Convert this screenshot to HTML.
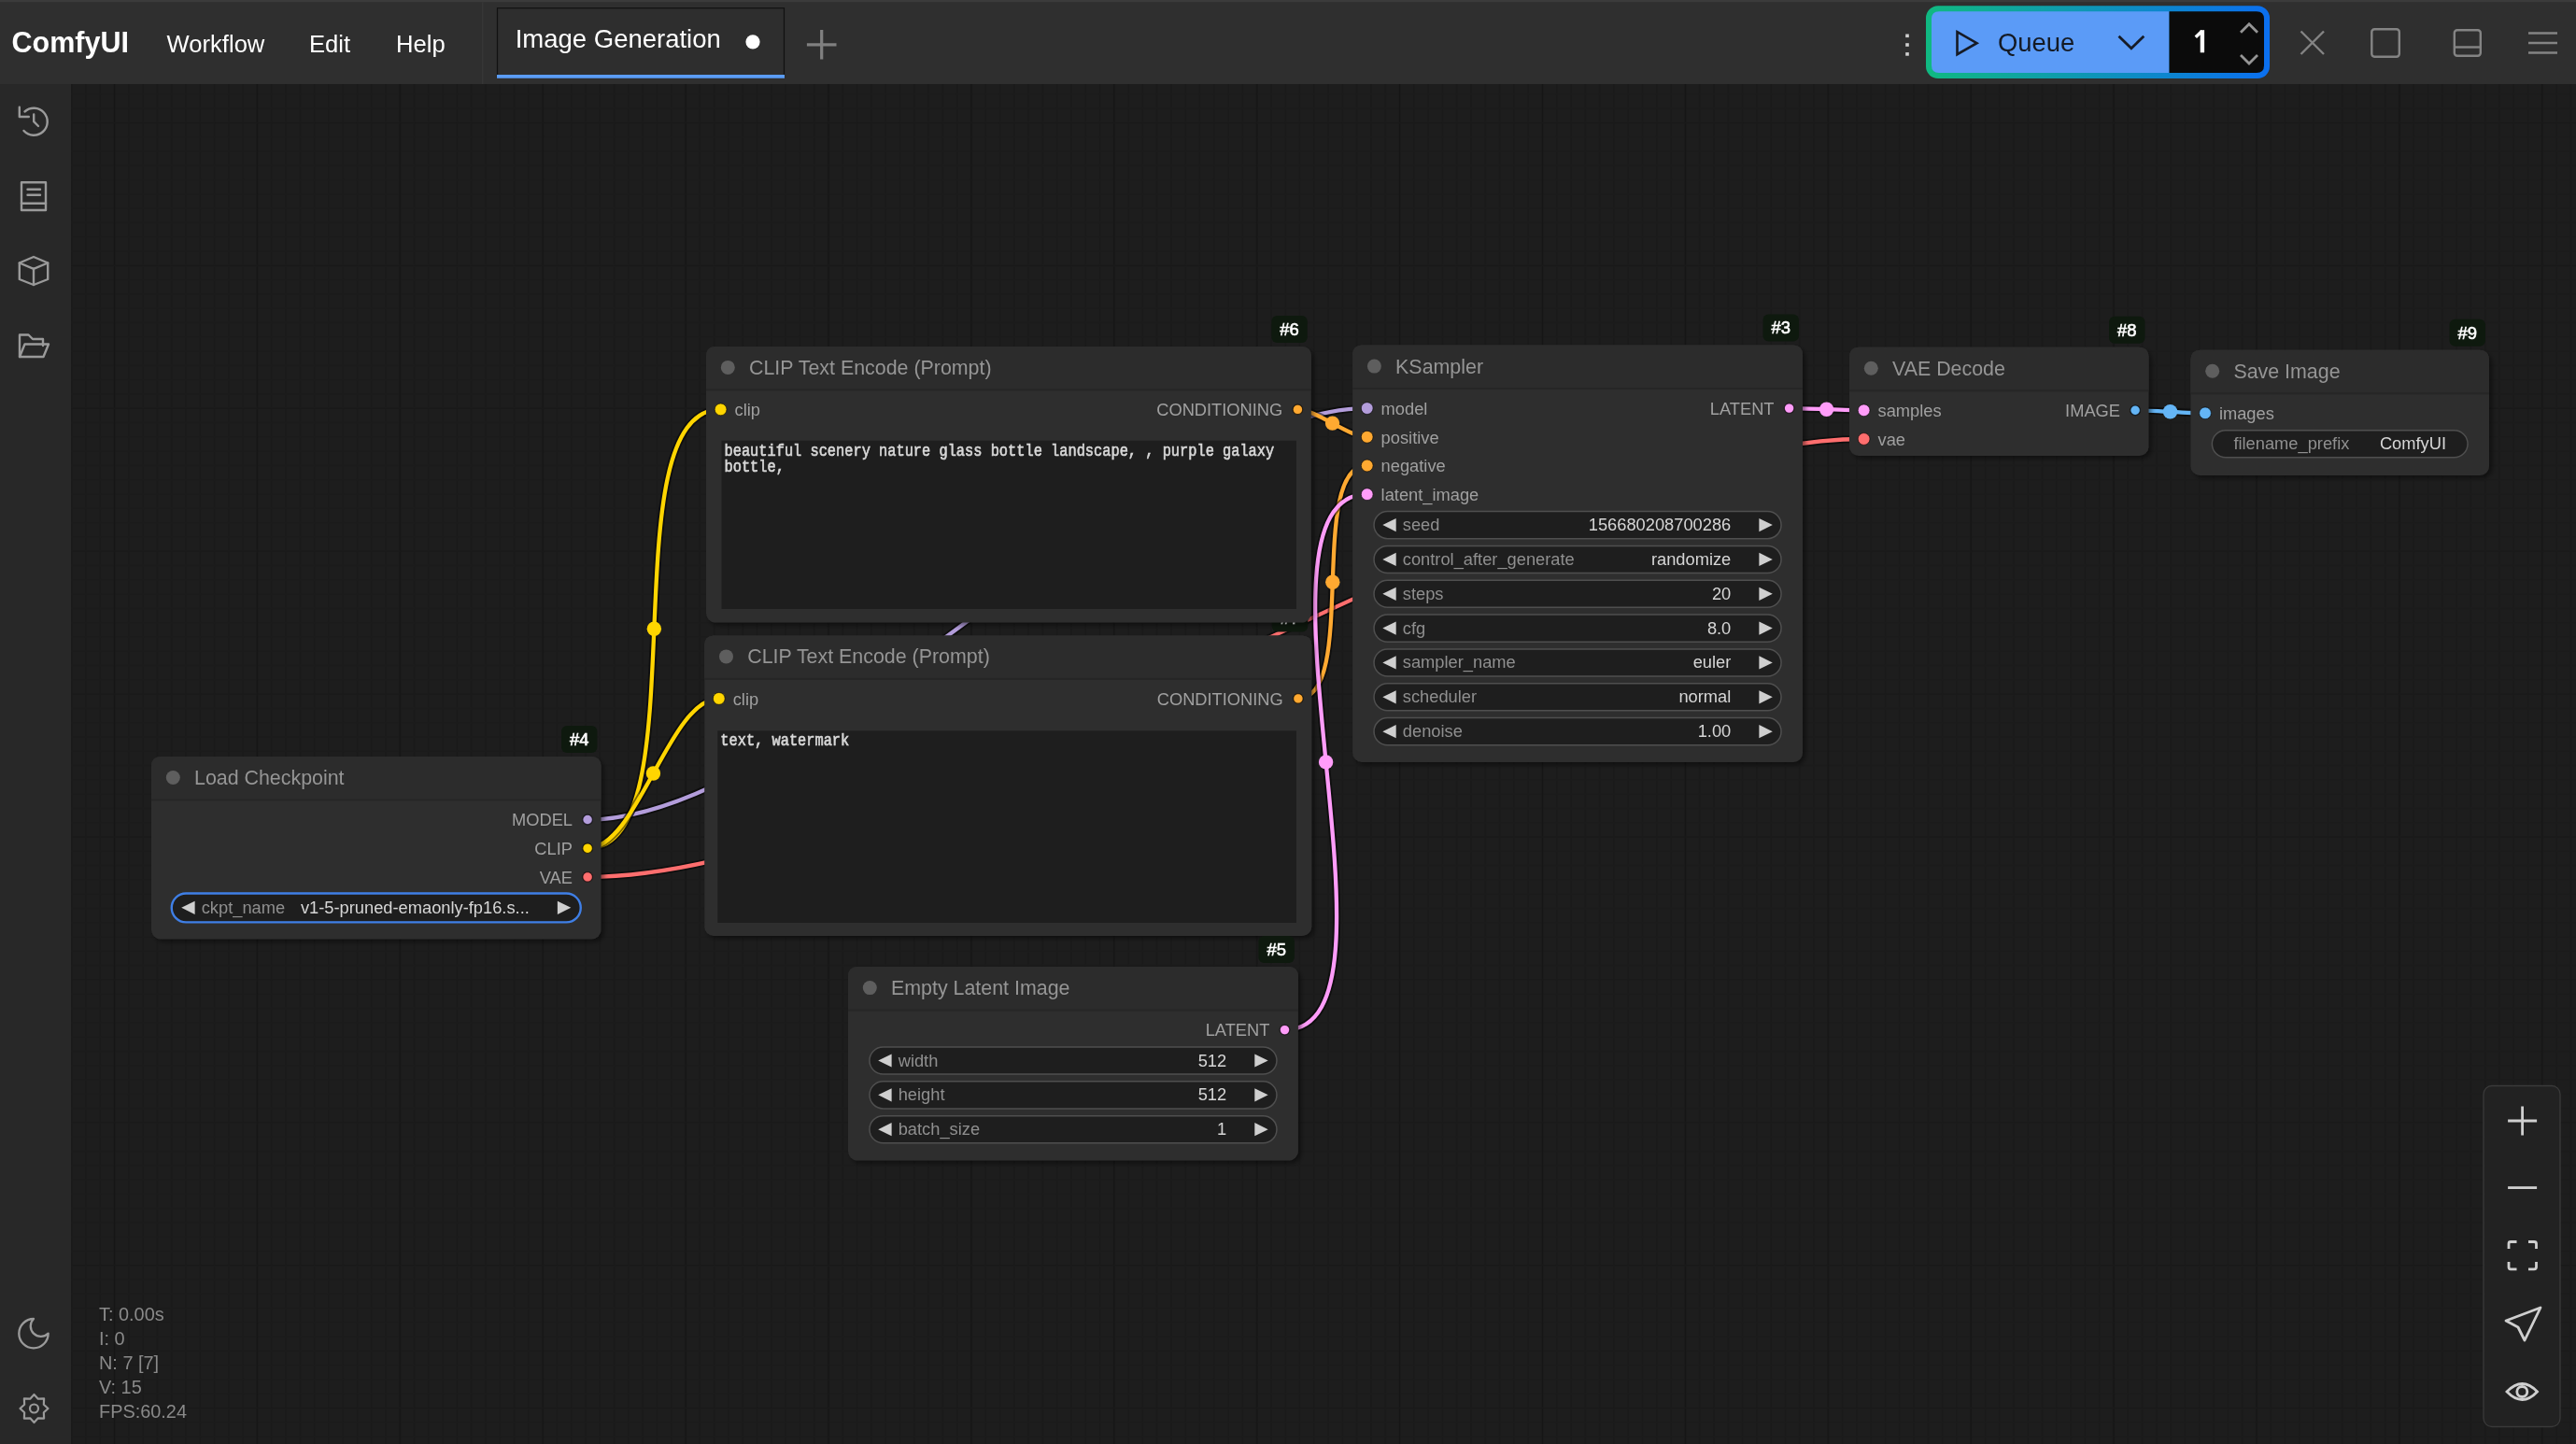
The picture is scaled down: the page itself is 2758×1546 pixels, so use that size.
<!DOCTYPE html>
<html><head><meta charset="utf-8"><title>ComfyUI</title>
<style>html,body{margin:0;padding:0;width:2758px;height:1546px;overflow:hidden;background:#1d1d1d;}
svg text{white-space:pre;}</style></head>
<body><div style="position:relative;width:2758px;height:1546px">
<svg width="2758" height="1546" viewBox="0 0 2758 1546" style="position:absolute;left:0;top:0;will-change:transform">
<defs>
<pattern id="gmin" x="-7.465" y="1.5549999999999997" width="15.29" height="15.29" patternUnits="userSpaceOnUse"><path d="M7.645 0V15.29" stroke="#191919" stroke-width="1.3" fill="none"/><path d="M0 7.645H15.29" stroke="#1a1a1a" stroke-width="1.1" fill="none"/></pattern>
<pattern id="gmaj" x="46.05" y="55.05" width="152.9" height="152.9" patternUnits="userSpaceOnUse"><path d="M76.45 0V152.9" stroke="#161616" stroke-width="1.6" fill="none"/><path d="M0 76.45H152.9" stroke="#191919" stroke-width="1.3" fill="none"/></pattern>
<filter id="sh" x="-5%" y="-5%" width="110%" height="110%"><feDropShadow dx="3" dy="3" stdDeviation="2.4" flood-color="#000" flood-opacity="0.45"/></filter>
</defs>
<rect x="0" y="0" width="2758" height="1546" fill="#1d1d1d"/>
<rect x="76" y="90" width="2682" height="1456" fill="url(#gmin)"/>
<rect x="76" y="90" width="2682" height="1456" fill="url(#gmaj)"/>
<g fill="none" stroke-linecap="round">
<path d="M629.10 877.49C865.02 877.49 1227.78 437.09 1463.70 437.09" stroke="rgba(0,0,0,0.5)" stroke-width="8"/>
<path d="M629.10 877.49C865.02 877.49 1227.78 437.09 1463.70 437.09" stroke="#B39DDB" stroke-width="4.3"/>
<circle cx="1046.40" cy="657.29" r="7.7" fill="#B39DDB" stroke="none"/>
<path d="M629.10 908.19C751.83 908.19 648.87 438.39 771.60 438.39" stroke="rgba(0,0,0,0.5)" stroke-width="8"/>
<path d="M629.10 908.19C751.83 908.19 648.87 438.39 771.60 438.39" stroke="#FFD500" stroke-width="4.3"/>
<circle cx="700.35" cy="673.29" r="7.7" fill="#FFD500" stroke="none"/>
<path d="M629.10 908.19C682.42 908.19 716.48 747.89 769.80 747.89" stroke="rgba(0,0,0,0.5)" stroke-width="8"/>
<path d="M629.10 908.19C682.42 908.19 716.48 747.89 769.80 747.89" stroke="#FFD500" stroke-width="4.3"/>
<circle cx="699.45" cy="828.04" r="7.7" fill="#FFD500" stroke="none"/>
<path d="M629.10 938.89C990.28 938.89 1634.42 469.99 1995.60 469.99" stroke="rgba(0,0,0,0.5)" stroke-width="8"/>
<path d="M629.10 938.89C990.28 938.89 1634.42 469.99 1995.60 469.99" stroke="#FF6E6E" stroke-width="4.3"/>
<circle cx="1312.35" cy="704.44" r="7.7" fill="#FF6E6E" stroke="none"/>
<path d="M1389.40 438.39C1409.38 438.39 1443.72 467.79 1463.70 467.79" stroke="rgba(0,0,0,0.5)" stroke-width="8"/>
<path d="M1389.40 438.39C1409.38 438.39 1443.72 467.79 1463.70 467.79" stroke="#FFA931" stroke-width="4.3"/>
<circle cx="1426.55" cy="453.09" r="7.7" fill="#FFA931" stroke="none"/>
<path d="M1389.90 747.89C1454.92 747.89 1398.68 498.49 1463.70 498.49" stroke="rgba(0,0,0,0.5)" stroke-width="8"/>
<path d="M1389.90 747.89C1454.92 747.89 1398.68 498.49 1463.70 498.49" stroke="#FFA931" stroke-width="4.3"/>
<circle cx="1426.80" cy="623.19" r="7.7" fill="#FFA931" stroke="none"/>
<path d="M1375.50 1102.59C1520.54 1102.59 1318.66 529.19 1463.70 529.19" stroke="rgba(0,0,0,0.5)" stroke-width="8"/>
<path d="M1375.50 1102.59C1520.54 1102.59 1318.66 529.19 1463.70 529.19" stroke="#FF9CF9" stroke-width="4.3"/>
<circle cx="1419.60" cy="815.89" r="7.7" fill="#FF9CF9" stroke="none"/>
<path d="M1915.60 437.09C1935.61 437.09 1975.59 439.29 1995.60 439.29" stroke="rgba(0,0,0,0.5)" stroke-width="8"/>
<path d="M1915.60 437.09C1935.61 437.09 1975.59 439.29 1995.60 439.29" stroke="#FF9CF9" stroke-width="4.3"/>
<circle cx="1955.60" cy="438.19" r="7.7" fill="#FF9CF9" stroke="none"/>
<path d="M2286.10 439.29C2304.84 439.29 2342.26 442.29 2361.00 442.29" stroke="rgba(0,0,0,0.5)" stroke-width="8"/>
<path d="M2286.10 439.29C2304.84 439.29 2342.26 442.29 2361.00 442.29" stroke="#64B5F6" stroke-width="4.3"/>
<circle cx="2323.55" cy="440.79" r="7.7" fill="#64B5F6" stroke="none"/>
</g>
<rect x="601.00" y="777.00" width="38.5" height="29" rx="6" fill="#0e190e"/>
<text x="620.25" y="797.80" font-size="18.4" fill="#ffffff" text-anchor="middle" font-weight="400" font-family='"Liberation Sans", sans-serif' stroke="#ffffff" stroke-width="0.6">#4</text>
<rect x="162.00" y="810.00" width="481.50" height="195.50" rx="10" fill="#2e2e2e" filter="url(#sh)"/>
<path d="M162.00 856.00V820.00Q162.00 810.00 172.00 810.00H633.50Q643.50 810.00 643.50 820.00V856.00Z" fill="#2c2c2c"/>
<rect x="162.00" y="855.50" width="481.50" height="2" fill="#262626"/>
<circle cx="185.30" cy="832.50" r="7.5" fill="#5e5e5e"/>
<text x="208.00" y="840.00" font-size="21.4" fill="#959595" text-anchor="start" font-weight="400" font-family='"Liberation Sans", sans-serif' >Load Checkpoint</text>
<circle cx="629.10" cy="877.49" r="5.3" fill="#B39DDB" stroke="rgba(0,0,0,0.7)" stroke-width="1.2"/>
<text x="613.00" y="884.29" font-size="18.3" fill="#a0a0a0" text-anchor="end" font-weight="400" font-family='"Liberation Sans", sans-serif' >MODEL</text>
<circle cx="629.10" cy="908.19" r="5.3" fill="#FFD500" stroke="rgba(0,0,0,0.7)" stroke-width="1.2"/>
<text x="613.00" y="914.99" font-size="18.3" fill="#a0a0a0" text-anchor="end" font-weight="400" font-family='"Liberation Sans", sans-serif' >CLIP</text>
<circle cx="629.10" cy="938.89" r="5.3" fill="#FF6E6E" stroke="rgba(0,0,0,0.7)" stroke-width="1.2"/>
<text x="613.00" y="945.69" font-size="18.3" fill="#a0a0a0" text-anchor="end" font-weight="400" font-family='"Liberation Sans", sans-serif' >VAE</text>
<rect x="183.75" y="956.45" width="438.00" height="30.90" rx="15.45" fill="#1e1e1e" stroke="#3f7fe6" stroke-width="2.4"/>
<path d="M208.60 964.70L194.20 971.80L208.60 978.90Z" fill="#cfcfcf"/>
<path d="M596.90 964.70L611.30 971.80L596.90 978.90Z" fill="#cfcfcf"/>
<text x="215.70" y="977.80" font-size="18.3" fill="#8f8f8f" text-anchor="start" font-weight="400" font-family='"Liberation Sans", sans-serif' >ckpt_name</text>
<text x="566.80" y="977.80" font-size="18.3" fill="#d6d6d6" text-anchor="end" font-weight="400" font-family='"Liberation Sans", sans-serif' >v1-5-pruned-emaonly-fp16.s...</text>
<rect x="1361.80" y="647.40" width="38.5" height="29" rx="6" fill="#0e190e"/>
<text x="1381.05" y="668.20" font-size="18.4" fill="#ffffff" text-anchor="middle" font-weight="400" font-family='"Liberation Sans", sans-serif' stroke="#ffffff" stroke-width="0.6">#7</text>
<rect x="754.20" y="680.40" width="650.10" height="321.60" rx="10" fill="#2e2e2e" filter="url(#sh)"/>
<path d="M754.20 726.40V690.40Q754.20 680.40 764.20 680.40H1394.30Q1404.30 680.40 1404.30 690.40V726.40Z" fill="#2c2c2c"/>
<rect x="754.20" y="725.90" width="650.10" height="2" fill="#262626"/>
<circle cx="777.50" cy="702.90" r="7.5" fill="#5e5e5e"/>
<text x="800.20" y="710.40" font-size="21.4" fill="#959595" text-anchor="start" font-weight="400" font-family='"Liberation Sans", sans-serif' >CLIP Text Encode (Prompt)</text>
<circle cx="769.80" cy="747.89" r="6.4" fill="#FFD500" stroke="rgba(0,0,0,0.6)" stroke-width="1"/>
<text x="784.70" y="754.69" font-size="18.3" fill="#a0a0a0" text-anchor="start" font-weight="400" font-family='"Liberation Sans", sans-serif' >clip</text>
<circle cx="1389.90" cy="747.89" r="5.3" fill="#FFA931" stroke="rgba(0,0,0,0.7)" stroke-width="1.2"/>
<text x="1373.80" y="754.69" font-size="18.3" fill="#a0a0a0" text-anchor="end" font-weight="400" font-family='"Liberation Sans", sans-serif' >CONDITIONING</text>
<rect x="768.30" y="782.40" width="619.70" height="205.60" fill="#1e1e1e"/>
<g transform="translate(0 798.50) scale(1 1.18) translate(0 -798.50)">
<text x="771.30" y="798.50" font-size="15.35" fill="#d8d8d8" text-anchor="start" font-weight="400" font-family='"Liberation Mono", monospace' xml:space="preserve" stroke="#d8d8d8" stroke-width="0.55">text, watermark</text>
</g>
<rect x="1361.30" y="337.90" width="38.5" height="29" rx="6" fill="#0e190e"/>
<text x="1380.55" y="358.70" font-size="18.4" fill="#ffffff" text-anchor="middle" font-weight="400" font-family='"Liberation Sans", sans-serif' stroke="#ffffff" stroke-width="0.6">#6</text>
<rect x="756.00" y="370.90" width="647.80" height="295.60" rx="10" fill="#2e2e2e" filter="url(#sh)"/>
<path d="M756.00 416.90V380.90Q756.00 370.90 766.00 370.90H1393.80Q1403.80 370.90 1403.80 380.90V416.90Z" fill="#2c2c2c"/>
<rect x="756.00" y="416.40" width="647.80" height="2" fill="#262626"/>
<circle cx="779.30" cy="393.40" r="7.5" fill="#5e5e5e"/>
<text x="802.00" y="400.90" font-size="21.4" fill="#959595" text-anchor="start" font-weight="400" font-family='"Liberation Sans", sans-serif' >CLIP Text Encode (Prompt)</text>
<circle cx="771.60" cy="438.39" r="6.4" fill="#FFD500" stroke="rgba(0,0,0,0.6)" stroke-width="1"/>
<text x="786.50" y="445.19" font-size="18.3" fill="#a0a0a0" text-anchor="start" font-weight="400" font-family='"Liberation Sans", sans-serif' >clip</text>
<circle cx="1389.40" cy="438.39" r="5.3" fill="#FFA931" stroke="rgba(0,0,0,0.7)" stroke-width="1.2"/>
<text x="1373.30" y="445.19" font-size="18.3" fill="#a0a0a0" text-anchor="end" font-weight="400" font-family='"Liberation Sans", sans-serif' >CONDITIONING</text>
<rect x="772.50" y="471.70" width="615.50" height="180.30" fill="#1e1e1e"/>
<g transform="translate(0 487.80) scale(1 1.18) translate(0 -487.80)">
<text x="775.50" y="487.80" font-size="15.35" fill="#d8d8d8" text-anchor="start" font-weight="400" font-family='"Liberation Mono", monospace' xml:space="preserve" stroke="#d8d8d8" stroke-width="0.55">beautiful scenery nature glass bottle landscape, , purple galaxy</text>
</g>
<g transform="translate(0 505.00) scale(1 1.18) translate(0 -505.00)">
<text x="775.50" y="505.00" font-size="15.35" fill="#d8d8d8" text-anchor="start" font-weight="400" font-family='"Liberation Mono", monospace' xml:space="preserve" stroke="#d8d8d8" stroke-width="0.55">bottle,</text>
</g>
<rect x="1347.40" y="1002.10" width="38.5" height="29" rx="6" fill="#0e190e"/>
<text x="1366.65" y="1022.90" font-size="18.4" fill="#ffffff" text-anchor="middle" font-weight="400" font-family='"Liberation Sans", sans-serif' stroke="#ffffff" stroke-width="0.6">#5</text>
<rect x="908.00" y="1035.10" width="481.90" height="207.40" rx="10" fill="#2e2e2e" filter="url(#sh)"/>
<path d="M908.00 1081.10V1045.10Q908.00 1035.10 918.00 1035.10H1379.90Q1389.90 1035.10 1389.90 1045.10V1081.10Z" fill="#2c2c2c"/>
<rect x="908.00" y="1080.60" width="481.90" height="2" fill="#262626"/>
<circle cx="931.30" cy="1057.60" r="7.5" fill="#5e5e5e"/>
<text x="954.00" y="1065.10" font-size="21.4" fill="#959595" text-anchor="start" font-weight="400" font-family='"Liberation Sans", sans-serif' >Empty Latent Image</text>
<circle cx="1375.50" cy="1102.59" r="5.3" fill="#FF9CF9" stroke="rgba(0,0,0,0.7)" stroke-width="1.2"/>
<text x="1359.40" y="1109.39" font-size="18.3" fill="#a0a0a0" text-anchor="end" font-weight="400" font-family='"Liberation Sans", sans-serif' >LATENT</text>
<rect x="930.95" y="1120.95" width="436.00" height="29.10" rx="14.55" fill="#1e1e1e" stroke="#4f4f4f" stroke-width="1.5"/>
<path d="M954.60 1128.40L940.20 1135.50L954.60 1142.60Z" fill="#cfcfcf"/>
<path d="M1343.30 1128.40L1357.70 1135.50L1343.30 1142.60Z" fill="#cfcfcf"/>
<text x="961.70" y="1141.50" font-size="18.3" fill="#8f8f8f" text-anchor="start" font-weight="400" font-family='"Liberation Sans", sans-serif' >width</text>
<text x="1313.20" y="1141.50" font-size="18.3" fill="#d6d6d6" text-anchor="end" font-weight="400" font-family='"Liberation Sans", sans-serif' >512</text>
<rect x="930.95" y="1157.79" width="436.00" height="29.10" rx="14.55" fill="#1e1e1e" stroke="#4f4f4f" stroke-width="1.5"/>
<path d="M954.60 1165.24L940.20 1172.34L954.60 1179.44Z" fill="#cfcfcf"/>
<path d="M1343.30 1165.24L1357.70 1172.34L1343.30 1179.44Z" fill="#cfcfcf"/>
<text x="961.70" y="1178.34" font-size="18.3" fill="#8f8f8f" text-anchor="start" font-weight="400" font-family='"Liberation Sans", sans-serif' >height</text>
<text x="1313.20" y="1178.34" font-size="18.3" fill="#d6d6d6" text-anchor="end" font-weight="400" font-family='"Liberation Sans", sans-serif' >512</text>
<rect x="930.95" y="1194.63" width="436.00" height="29.10" rx="14.55" fill="#1e1e1e" stroke="#4f4f4f" stroke-width="1.5"/>
<path d="M954.60 1202.08L940.20 1209.18L954.60 1216.28Z" fill="#cfcfcf"/>
<path d="M1343.30 1202.08L1357.70 1209.18L1343.30 1216.28Z" fill="#cfcfcf"/>
<text x="961.70" y="1215.18" font-size="18.3" fill="#8f8f8f" text-anchor="start" font-weight="400" font-family='"Liberation Sans", sans-serif' >batch_size</text>
<text x="1313.20" y="1215.18" font-size="18.3" fill="#d6d6d6" text-anchor="end" font-weight="400" font-family='"Liberation Sans", sans-serif' >1</text>
<rect x="1887.50" y="336.60" width="38.5" height="29" rx="6" fill="#0e190e"/>
<text x="1906.75" y="357.40" font-size="18.4" fill="#ffffff" text-anchor="middle" font-weight="400" font-family='"Liberation Sans", sans-serif' stroke="#ffffff" stroke-width="0.6">#3</text>
<rect x="1448.10" y="369.60" width="481.90" height="446.40" rx="10" fill="#2e2e2e" filter="url(#sh)"/>
<path d="M1448.10 415.60V379.60Q1448.10 369.60 1458.10 369.60H1920.00Q1930.00 369.60 1930.00 379.60V415.60Z" fill="#2c2c2c"/>
<rect x="1448.10" y="415.10" width="481.90" height="2" fill="#262626"/>
<circle cx="1471.40" cy="392.10" r="7.5" fill="#5e5e5e"/>
<text x="1494.10" y="399.60" font-size="21.4" fill="#959595" text-anchor="start" font-weight="400" font-family='"Liberation Sans", sans-serif' >KSampler</text>
<circle cx="1463.70" cy="437.09" r="6.4" fill="#B39DDB" stroke="rgba(0,0,0,0.6)" stroke-width="1"/>
<text x="1478.60" y="443.89" font-size="18.3" fill="#a0a0a0" text-anchor="start" font-weight="400" font-family='"Liberation Sans", sans-serif' >model</text>
<circle cx="1463.70" cy="467.79" r="6.4" fill="#FFA931" stroke="rgba(0,0,0,0.6)" stroke-width="1"/>
<text x="1478.60" y="474.59" font-size="18.3" fill="#a0a0a0" text-anchor="start" font-weight="400" font-family='"Liberation Sans", sans-serif' >positive</text>
<circle cx="1463.70" cy="498.49" r="6.4" fill="#FFA931" stroke="rgba(0,0,0,0.6)" stroke-width="1"/>
<text x="1478.60" y="505.29" font-size="18.3" fill="#a0a0a0" text-anchor="start" font-weight="400" font-family='"Liberation Sans", sans-serif' >negative</text>
<circle cx="1463.70" cy="529.19" r="6.4" fill="#FF9CF9" stroke="rgba(0,0,0,0.6)" stroke-width="1"/>
<text x="1478.60" y="535.99" font-size="18.3" fill="#a0a0a0" text-anchor="start" font-weight="400" font-family='"Liberation Sans", sans-serif' >latent_image</text>
<circle cx="1915.60" cy="437.09" r="5.3" fill="#FF9CF9" stroke="rgba(0,0,0,0.7)" stroke-width="1.2"/>
<text x="1899.50" y="443.89" font-size="18.3" fill="#a0a0a0" text-anchor="end" font-weight="400" font-family='"Liberation Sans", sans-serif' >LATENT</text>
<rect x="1471.05" y="547.55" width="436.00" height="29.10" rx="14.55" fill="#1e1e1e" stroke="#4f4f4f" stroke-width="1.5"/>
<path d="M1494.70 555.00L1480.30 562.10L1494.70 569.20Z" fill="#cfcfcf"/>
<path d="M1883.40 555.00L1897.80 562.10L1883.40 569.20Z" fill="#cfcfcf"/>
<text x="1501.80" y="568.10" font-size="18.3" fill="#8f8f8f" text-anchor="start" font-weight="400" font-family='"Liberation Sans", sans-serif' >seed</text>
<text x="1853.30" y="568.10" font-size="18.3" fill="#d6d6d6" text-anchor="end" font-weight="400" font-family='"Liberation Sans", sans-serif' >156680208700286</text>
<rect x="1471.05" y="584.39" width="436.00" height="29.10" rx="14.55" fill="#1e1e1e" stroke="#4f4f4f" stroke-width="1.5"/>
<path d="M1494.70 591.84L1480.30 598.94L1494.70 606.04Z" fill="#cfcfcf"/>
<path d="M1883.40 591.84L1897.80 598.94L1883.40 606.04Z" fill="#cfcfcf"/>
<text x="1501.80" y="604.94" font-size="18.3" fill="#8f8f8f" text-anchor="start" font-weight="400" font-family='"Liberation Sans", sans-serif' >control_after_generate</text>
<text x="1853.30" y="604.94" font-size="18.3" fill="#d6d6d6" text-anchor="end" font-weight="400" font-family='"Liberation Sans", sans-serif' >randomize</text>
<rect x="1471.05" y="621.23" width="436.00" height="29.10" rx="14.55" fill="#1e1e1e" stroke="#4f4f4f" stroke-width="1.5"/>
<path d="M1494.70 628.68L1480.30 635.78L1494.70 642.88Z" fill="#cfcfcf"/>
<path d="M1883.40 628.68L1897.80 635.78L1883.40 642.88Z" fill="#cfcfcf"/>
<text x="1501.80" y="641.78" font-size="18.3" fill="#8f8f8f" text-anchor="start" font-weight="400" font-family='"Liberation Sans", sans-serif' >steps</text>
<text x="1853.30" y="641.78" font-size="18.3" fill="#d6d6d6" text-anchor="end" font-weight="400" font-family='"Liberation Sans", sans-serif' >20</text>
<rect x="1471.05" y="658.07" width="436.00" height="29.10" rx="14.55" fill="#1e1e1e" stroke="#4f4f4f" stroke-width="1.5"/>
<path d="M1494.70 665.52L1480.30 672.62L1494.70 679.72Z" fill="#cfcfcf"/>
<path d="M1883.40 665.52L1897.80 672.62L1883.40 679.72Z" fill="#cfcfcf"/>
<text x="1501.80" y="678.62" font-size="18.3" fill="#8f8f8f" text-anchor="start" font-weight="400" font-family='"Liberation Sans", sans-serif' >cfg</text>
<text x="1853.30" y="678.62" font-size="18.3" fill="#d6d6d6" text-anchor="end" font-weight="400" font-family='"Liberation Sans", sans-serif' >8.0</text>
<rect x="1471.05" y="694.91" width="436.00" height="29.10" rx="14.55" fill="#1e1e1e" stroke="#4f4f4f" stroke-width="1.5"/>
<path d="M1494.70 702.36L1480.30 709.46L1494.70 716.56Z" fill="#cfcfcf"/>
<path d="M1883.40 702.36L1897.80 709.46L1883.40 716.56Z" fill="#cfcfcf"/>
<text x="1501.80" y="715.46" font-size="18.3" fill="#8f8f8f" text-anchor="start" font-weight="400" font-family='"Liberation Sans", sans-serif' >sampler_name</text>
<text x="1853.30" y="715.46" font-size="18.3" fill="#d6d6d6" text-anchor="end" font-weight="400" font-family='"Liberation Sans", sans-serif' >euler</text>
<rect x="1471.05" y="731.75" width="436.00" height="29.10" rx="14.55" fill="#1e1e1e" stroke="#4f4f4f" stroke-width="1.5"/>
<path d="M1494.70 739.20L1480.30 746.30L1494.70 753.40Z" fill="#cfcfcf"/>
<path d="M1883.40 739.20L1897.80 746.30L1883.40 753.40Z" fill="#cfcfcf"/>
<text x="1501.80" y="752.30" font-size="18.3" fill="#8f8f8f" text-anchor="start" font-weight="400" font-family='"Liberation Sans", sans-serif' >scheduler</text>
<text x="1853.30" y="752.30" font-size="18.3" fill="#d6d6d6" text-anchor="end" font-weight="400" font-family='"Liberation Sans", sans-serif' >normal</text>
<rect x="1471.05" y="768.59" width="436.00" height="29.10" rx="14.55" fill="#1e1e1e" stroke="#4f4f4f" stroke-width="1.5"/>
<path d="M1494.70 776.04L1480.30 783.14L1494.70 790.24Z" fill="#cfcfcf"/>
<path d="M1883.40 776.04L1897.80 783.14L1883.40 790.24Z" fill="#cfcfcf"/>
<text x="1501.80" y="789.14" font-size="18.3" fill="#8f8f8f" text-anchor="start" font-weight="400" font-family='"Liberation Sans", sans-serif' >denoise</text>
<text x="1853.30" y="789.14" font-size="18.3" fill="#d6d6d6" text-anchor="end" font-weight="400" font-family='"Liberation Sans", sans-serif' >1.00</text>
<rect x="2258.00" y="338.80" width="38.5" height="29" rx="6" fill="#0e190e"/>
<text x="2277.25" y="359.60" font-size="18.4" fill="#ffffff" text-anchor="middle" font-weight="400" font-family='"Liberation Sans", sans-serif' stroke="#ffffff" stroke-width="0.6">#8</text>
<rect x="1980.00" y="371.80" width="320.50" height="116.20" rx="10" fill="#2e2e2e" filter="url(#sh)"/>
<path d="M1980.00 417.80V381.80Q1980.00 371.80 1990.00 371.80H2290.50Q2300.50 371.80 2300.50 381.80V417.80Z" fill="#2c2c2c"/>
<rect x="1980.00" y="417.30" width="320.50" height="2" fill="#262626"/>
<circle cx="2003.30" cy="394.30" r="7.5" fill="#5e5e5e"/>
<text x="2026.00" y="401.80" font-size="21.4" fill="#959595" text-anchor="start" font-weight="400" font-family='"Liberation Sans", sans-serif' >VAE Decode</text>
<circle cx="1995.60" cy="439.29" r="6.4" fill="#FF9CF9" stroke="rgba(0,0,0,0.6)" stroke-width="1"/>
<text x="2010.50" y="446.09" font-size="18.3" fill="#a0a0a0" text-anchor="start" font-weight="400" font-family='"Liberation Sans", sans-serif' >samples</text>
<circle cx="1995.60" cy="469.99" r="6.4" fill="#FF6E6E" stroke="rgba(0,0,0,0.6)" stroke-width="1"/>
<text x="2010.50" y="476.79" font-size="18.3" fill="#a0a0a0" text-anchor="start" font-weight="400" font-family='"Liberation Sans", sans-serif' >vae</text>
<circle cx="2286.10" cy="439.29" r="5.3" fill="#64B5F6" stroke="rgba(0,0,0,0.7)" stroke-width="1.2"/>
<text x="2270.00" y="446.09" font-size="18.3" fill="#a0a0a0" text-anchor="end" font-weight="400" font-family='"Liberation Sans", sans-serif' >IMAGE</text>
<rect x="2622.50" y="341.80" width="38.5" height="29" rx="6" fill="#0e190e"/>
<text x="2641.75" y="362.60" font-size="18.4" fill="#ffffff" text-anchor="middle" font-weight="400" font-family='"Liberation Sans", sans-serif' stroke="#ffffff" stroke-width="0.6">#9</text>
<rect x="2345.40" y="374.80" width="319.60" height="134.20" rx="10" fill="#2e2e2e" filter="url(#sh)"/>
<path d="M2345.40 420.80V384.80Q2345.40 374.80 2355.40 374.80H2655.00Q2665.00 374.80 2665.00 384.80V420.80Z" fill="#2c2c2c"/>
<rect x="2345.40" y="420.30" width="319.60" height="2" fill="#262626"/>
<circle cx="2368.70" cy="397.30" r="7.5" fill="#5e5e5e"/>
<text x="2391.40" y="404.80" font-size="21.4" fill="#959595" text-anchor="start" font-weight="400" font-family='"Liberation Sans", sans-serif' >Save Image</text>
<circle cx="2361.00" cy="442.29" r="6.4" fill="#64B5F6" stroke="rgba(0,0,0,0.6)" stroke-width="1"/>
<text x="2375.90" y="449.09" font-size="18.3" fill="#a0a0a0" text-anchor="start" font-weight="400" font-family='"Liberation Sans", sans-serif' >images</text>
<rect x="2368.35" y="460.65" width="273.70" height="29.10" rx="14.55" fill="#1e1e1e" stroke="#4f4f4f" stroke-width="1.5"/>
<text x="2391.40" y="481.20" font-size="18.3" fill="#8f8f8f" text-anchor="start" font-weight="400" font-family='"Liberation Sans", sans-serif' >filename_prefix</text>
<text x="2619.00" y="481.20" font-size="18.3" fill="#d6d6d6" text-anchor="end" font-weight="400" font-family='"Liberation Sans", sans-serif' >ComfyUI</text>
<rect x="0" y="0" width="2758" height="90" fill="#2f2f2f"/>
<rect x="0" y="0" width="2758" height="2.3" fill="#3b3b3b"/>
<text x="12.60" y="55.90" font-size="30.5" fill="#ffffff" text-anchor="start" font-weight="700" font-family='"Liberation Sans", sans-serif' >ComfyUI</text>
<text x="178.60" y="55.90" font-size="25.6" fill="#ffffff" text-anchor="start" font-weight="400" font-family='"Liberation Sans", sans-serif' >Workflow</text>
<text x="331.00" y="55.90" font-size="25.6" fill="#ffffff" text-anchor="start" font-weight="400" font-family='"Liberation Sans", sans-serif' >Edit</text>
<text x="424.00" y="55.90" font-size="25.6" fill="#ffffff" text-anchor="start" font-weight="400" font-family='"Liberation Sans", sans-serif' >Help</text>
<rect x="516.2" y="2.3" width="1.2" height="87.7" fill="#383838"/>
<rect x="532.5" y="8.7" width="307" height="74.5" fill="#2e2e2e" stroke="#111" stroke-width="1.2"/>
<rect x="532" y="80" width="308" height="3.8" fill="#5b9cf5"/>
<text x="551.70" y="51.30" font-size="27.5" fill="#ffffff" text-anchor="start" font-weight="400" font-family='"Liberation Sans", sans-serif' >Image Generation</text>
<circle cx="806" cy="44.8" r="7.6" fill="#ffffff"/>
<path d="M879.7 32V63.6M863.9 47.8H895.5" stroke="#808080" stroke-width="3.2"/>
<rect x="2040.2" y="36.5" width="3.6" height="3.6" fill="#cfcfcf"/>
<rect x="2040.2" y="46.2" width="3.6" height="3.6" fill="#cfcfcf"/>
<rect x="2040.2" y="56.1" width="3.6" height="3.6" fill="#cfcfcf"/>
<defs><linearGradient id="qg" x1="0" y1="0" x2="1" y2="0"><stop offset="0" stop-color="#10b981"/><stop offset="1" stop-color="#0b6ff0"/></linearGradient></defs>
<rect x="2062" y="6.2" width="368" height="77.8" rx="13" fill="url(#qg)"/>
<path d="M2076 12.2H2322.5V78H2076Q2068 78 2068 70V20.2Q2068 12.2 2076 12.2Z" fill="#5b9bf7"/>
<path d="M2322.5 12.2H2416Q2424 12.2 2424 20.2V70Q2424 78 2416 78H2322.5Z" fill="#0b0b0b"/>
<path d="M2095.5 34.2L2116.5 46.2L2095.5 58.2Z" fill="none" stroke="#161b26" stroke-width="2.6" stroke-linejoin="miter"/>
<text x="2139.00" y="55.40" font-size="27.4" fill="#141a24" text-anchor="start" font-weight="400" font-family='"Liberation Sans", sans-serif' >Queue</text>
<path d="M2268.5 38.8L2281.9 51.8L2295.3 38.8" fill="none" stroke="#161b26" stroke-width="2.8"/>
<path d="M2357.9 32.2V56.3" stroke="#ffffff" stroke-width="4.4"/><path d="M2350.8 39.8L2357.6 33.2" stroke="#ffffff" stroke-width="3.4"/>
<path d="M2399 34.8L2408 25.8L2417 34.8M2399 59L2408 68L2417 59" fill="none" stroke="#959595" stroke-width="2.8"/>
<path d="M2463.5 33.5L2488 58M2488 33.5L2463.5 58" stroke="#848484" stroke-width="2.4" fill="none"/>
<rect x="2539.3" y="31.3" width="29.5" height="29.5" rx="3" stroke="#848484" stroke-width="2.4" fill="none"/>
<rect x="2627.8" y="32.2" width="28" height="27.5" rx="3" stroke="#848484" stroke-width="2.4" fill="none"/><path d="M2627.8 50.5H2655.8" stroke="#848484" stroke-width="2.4"/>
<path d="M2707 35.5H2738M2707 46H2738M2707 56.5H2738" stroke="#848484" stroke-width="2.4"/>
<rect x="0" y="90" width="76" height="1456" fill="#282828"/>
<g fill="none" stroke="#9a9a9a" stroke-width="2.4" stroke-linecap="round" stroke-linejoin="round">
<path d="M26.5 119.5A14.5 14.5 0 1 1 25.5 140"/><path d="M20.8 114.8V125H30.8"/><path d="M36.2 122.4V130.2L41 135"/>
<path d="M23 225V195.2H49V225Z"/><path d="M23 217.8H49"/><path d="M29.5 202.8H43M29.5 208.8H43"/>
<path d="M36 275L51.2 281.5V299L36 305L20.8 299V281.5Z"/><path d="M20.8 281.5L36 287.8L51.2 281.5M36 287.8V305"/>
<path d="M21 382V358.5H30.5L35 363H46V370"/><path d="M21 382L26.5 368.5H52L46.5 382Z"/>
</g>
<path transform="translate(15.1 1406.8) scale(1.74)" d="M12 3a6 6 0 0 0 9 9 9 9 0 1 1-9-9Z" fill="none" stroke="#9a9a9a" stroke-width="1.35" stroke-linejoin="round"/>
<path d="M36.50 1493.00 L40.79 1497.65 L47.11 1497.39 L46.85 1503.71 L51.50 1508.00 L46.85 1512.29 L47.11 1518.61 L40.79 1518.35 L36.50 1523.00 L32.21 1518.35 L25.89 1518.61 L26.15 1512.29 L21.50 1508.00 L26.15 1503.71 L25.89 1497.39 L32.21 1497.65Z" fill="none" stroke="#9a9a9a" stroke-width="2.2" stroke-linejoin="round"/>
<circle cx="36.5" cy="1508" r="4.5" fill="none" stroke="#9a9a9a" stroke-width="2.2"/>
<text x="106.00" y="1413.90" font-size="19.9" fill="#8a8a8a" text-anchor="start" font-weight="400" font-family='"Liberation Sans", sans-serif' >T: 0.00s</text>
<text x="106.00" y="1439.80" font-size="19.9" fill="#8a8a8a" text-anchor="start" font-weight="400" font-family='"Liberation Sans", sans-serif' >I: 0</text>
<text x="106.00" y="1465.70" font-size="19.9" fill="#8a8a8a" text-anchor="start" font-weight="400" font-family='"Liberation Sans", sans-serif' >N: 7 [7]</text>
<text x="106.00" y="1491.60" font-size="19.9" fill="#8a8a8a" text-anchor="start" font-weight="400" font-family='"Liberation Sans", sans-serif' >V: 15</text>
<text x="106.00" y="1517.50" font-size="19.9" fill="#8a8a8a" text-anchor="start" font-weight="400" font-family='"Liberation Sans", sans-serif' >FPS:60.24</text>
<rect x="2659" y="1162.5" width="82" height="365" rx="9" fill="#222222" stroke="#3a3a3a" stroke-width="1.3"/>
<g fill="none" stroke="#cfcfcf" stroke-width="2.8">
<path d="M2700.6 1184.5V1215.5M2685.1 1200H2716.1"/>
<path d="M2685.1 1271.6H2716.1"/>
<path d="M2686 1337V1331.5Q2686 1329.5 2688 1329.5H2694.5M2707 1329.5H2713Q2715.5 1329.5 2715.5 1331.5V1337M2715.5 1351V1356.5Q2715.5 1358.8 2713 1358.8H2707M2694.5 1358.8H2688Q2686 1358.8 2686 1356.5V1351"/>
<path d="M2720 1400L2683 1414L2696 1421L2703 1435Z" stroke-linejoin="round"/>
<path d="M2684 1490Q2700.6 1473 2716.5 1490Q2700.6 1507 2684 1490Z"/><circle cx="2700.3" cy="1490" r="5.5"/>
</g>
</svg>
</div></body></html>
